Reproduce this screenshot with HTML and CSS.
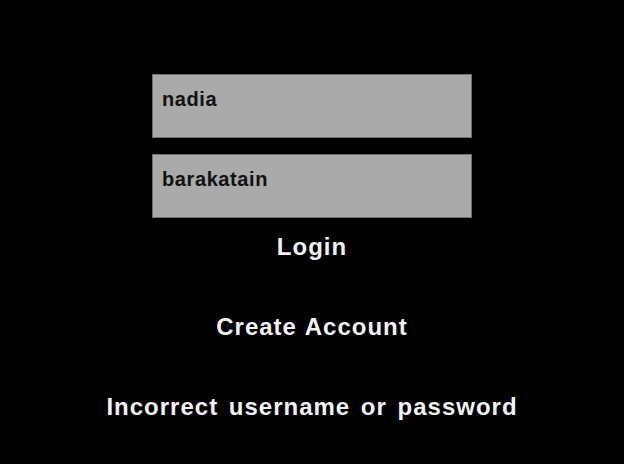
FILE: index.html
```html
<!DOCTYPE html>
<html>
<head>
  <title>Login</title>
  <link rel="stylesheet" href="styles.css">
</head>
<body>
  <div class="screen">
    <div class="field">nadia</div>
    <div class="field">barakatain</div>
    <div class="action">Login</div>
    <div class="action">Create Account</div>
    <div class="message">Incorrect username or password</div>
  </div>
</body>
</html>
```

FILE: styles.css
```css
html, body {
  margin: 0;
  height: 100%;
  background: #000;
}
body {
  font-family: "Liberation Sans", Arial, sans-serif;
  font-weight: bold;
}
.screen {
  display: flex;
  flex-direction: column;
  align-items: center;
  padding-top: 74px;
}
.field {
  box-sizing: border-box;
  width: 320px;
  height: 64px;
  margin-bottom: 16px;
  padding: 12px 9px 0;
  background: #aaaaaa;
  border: 1px solid #6e6e6e;
  color: #111;
  font-size: 20px;
  line-height: 24px;
  letter-spacing: 0.6px;
}
.field + .field {
  margin-bottom: 15px;
}
.action, .message {
  color: #f2f2f2;
  font-size: 24px;
  line-height: 28px;
  letter-spacing: 1px;
  word-spacing: 1px;
  margin-bottom: 52px;
}
.message {
  word-spacing: 3px;
}
```
